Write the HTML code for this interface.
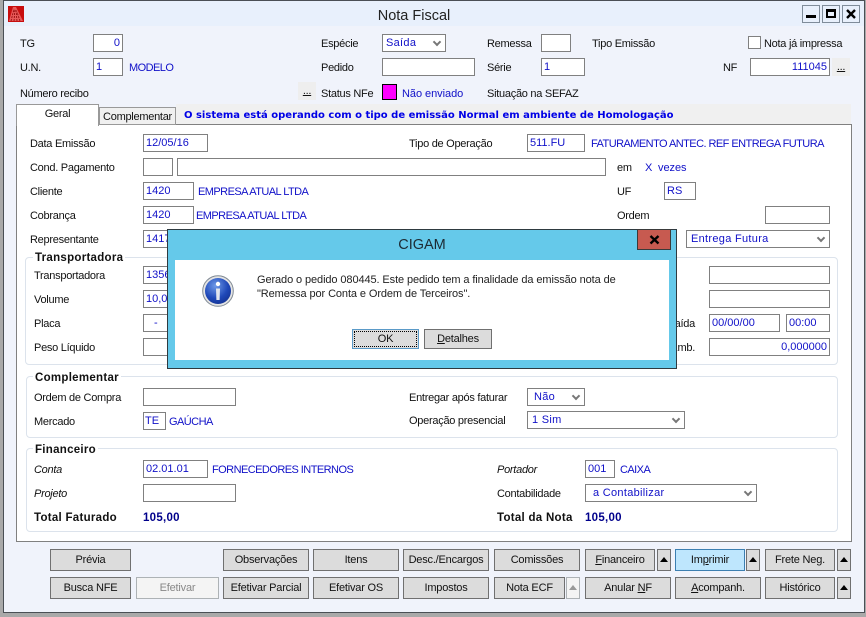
<!DOCTYPE html>
<html><head><meta charset="utf-8">
<style>
html,body{margin:0;padding:0}
body{width:866px;height:617px;position:relative;overflow:hidden;background:#a9a9a9;font:11px/18px "Liberation Sans",sans-serif;letter-spacing:-.27px;color:#111}
div,span.a{position:absolute;box-sizing:border-box;white-space:nowrap}
#win{left:3px;top:0;width:862px;height:613px;background:#f0f3fb;border:1px solid #4a4f55}
#tb{left:4px;top:1px;width:860px;height:25px;background:#e8f0fc}
.t{position:absolute;height:18px;line-height:18px;white-space:nowrap;margin-top:1px}
.b{color:#1010c8;letter-spacing:-.55px}
.m{color:#1010c8;letter-spacing:-.05px}
.i{height:18px;border:1px solid #808080;background:#fff;line-height:16px;color:#1010c8;padding:0 2px;overflow:hidden;letter-spacing:0}
.r{text-align:right}
.s{letter-spacing:.3px}
.s:after{content:"";position:absolute;right:5px;top:4px;width:4px;height:4px;border-right:2px solid #777;border-bottom:2px solid #777;transform:rotate(45deg)}
.g{border:1px solid #dce3ec;border-radius:4px}
.gt{font-weight:bold;background:#fff;padding:0 2px;height:14px;line-height:14px;color:#111;font-size:11.5px;letter-spacing:.28px;margin-top:1px}
.k{font-weight:bold;font-size:11.5px;letter-spacing:.28px}
.btn{height:22px;border:1px solid #707070;background:#dcdcdc;text-align:center;line-height:20px;color:#111;letter-spacing:-.2px}
.ar:after{content:"";position:absolute;left:2px;top:7px;border-left:4px solid transparent;border-right:4px solid transparent;border-bottom:5px solid #000}
.w{width:18px;height:18px;top:5px;border:1px solid #7f8c9a;background:#e8f0fc}
.e{background:#eee;width:18px;height:18px;text-align:center;line-height:18px}
u{text-decoration:underline}
</style></head><body>
<div id="win"></div><div id="tb"></div>
<svg style="position:absolute;left:8px;top:6px" width="16" height="16" viewBox="0 0 16 16"><rect width="16" height="16" fill="#c80d0d"/><path d="M1 15L5 1h3l7 14z" fill="#e85a5a"/><path d="M3 15L6 3M6 15L7 3M9 15L8 4M12 15L9 6" stroke="#8a0505" stroke-width=".8" stroke-dasharray="2 1"/></svg>
<div class="t" style="left:0;width:828px;top:6px;text-align:center;font-size:14.5px;letter-spacing:0;color:#222">Nota Fiscal</div>
<div class="w" style="left:802px"><div style="left:3px;top:9px;width:10px;height:3px;background:#000"></div></div>
<div class="w" style="left:822px"><div style="left:3px;top:3px;width:10px;height:9px;border:2px solid #000;border-top-width:3px"></div></div>
<div class="w" style="left:842px"><svg style="position:absolute;left:2px;top:2px" width="12" height="12"><path d="M2 2l8 8M10 2l-8 8" stroke="#000" stroke-width="2.4"/></svg></div>

<div class="t" style="left:20px;top:34px">TG</div><div class="i r" style="left:93px;top:34px;width:30px">0</div>
<div class="t" style="left:321px;top:34px">Espécie</div><div class="i s" style="left:382px;top:34px;width:64px;padding-left:3px">Saída</div>
<div class="t" style="left:487px;top:34px">Remessa</div><div class="i" style="left:541px;top:34px;width:30px"></div>
<div class="t" style="left:592px;top:34px">Tipo Emissão</div>
<div class="i" style="left:748px;top:36px;width:13px;height:13px"></div><div class="t" style="left:764px;top:34px">Nota já impressa</div>

<div class="t" style="left:20px;top:58px">U.N.</div><div class="i" style="left:93px;top:58px;width:30px">1</div><div class="t b" style="left:129px;top:58px">MODELO</div>
<div class="t" style="left:321px;top:58px">Pedido</div><div class="i" style="left:382px;top:58px;width:93px"></div>
<div class="t" style="left:487px;top:58px">Série</div><div class="i" style="left:541px;top:58px;width:44px">1</div>
<div class="t" style="left:723px;top:58px">NF</div><div class="i r" style="left:750px;top:58px;width:80px">111045</div><div class="e" style="left:832px;top:58px"><u>...</u></div>

<div class="t" style="left:20px;top:84px">Número recibo</div><div class="e" style="left:298px;top:82px"><u>...</u></div>
<div class="t" style="left:321px;top:84px">Status NFe</div><div style="left:382px;top:84px;width:15px;height:16px;background:#ff00ff;border:1px solid #000"></div>
<div class="t m" style="left:402px;top:84px">Não enviado</div><div class="t" style="left:487px;top:84px">Situação na SEFAZ</div>

<div style="left:16px;top:124px;width:836px;height:418px;background:#fff;border:1px solid #808080"></div>
<div style="left:99px;top:107px;width:77px;height:18px;background:#f0f0f0;border:1px solid #999;text-align:center;line-height:18px">Complementar</div>
<div style="left:16px;top:104px;width:83px;height:22px;background:#fff;border:1px solid #999;border-bottom:0;text-align:center;line-height:18px">Geral</div>
<div style="left:176px;top:104px;width:675px;height:20px;background:#f0f0f0"></div>
<div class="t" style="left:184px;top:106px;font:bold 10px/18px 'DejaVu Sans',sans-serif;letter-spacing:0;color:#0000e6">O sistema está operando com o tipo de emissão Normal em ambiente de Homologação</div>

<div class="t" style="left:30px;top:134px">Data Emissão</div><div class="i" style="left:143px;top:134px;width:65px">12/05/16</div>
<div class="t" style="left:409px;top:134px">Tipo de Operação</div><div class="i" style="left:527px;top:134px;width:58px">511.FU</div><div class="t b" style="left:591px;top:134px">FATURAMENTO ANTEC. REF ENTREGA FUTURA</div>
<div class="t" style="left:30px;top:158px">Cond. Pagamento</div><div class="i" style="left:143px;top:158px;width:30px"></div><div class="i" style="left:177px;top:158px;width:429px"></div>
<div class="t" style="left:617px;top:158px">em</div><div class="t m" style="left:645px;top:158px">X</div><div class="t m" style="left:658px;top:158px">vezes</div>
<div class="t" style="left:30px;top:182px">Cliente</div><div class="i" style="left:143px;top:182px;width:51px">1420</div><div class="t b" style="left:198px;top:182px">EMPRESA ATUAL LTDA</div>
<div class="t" style="left:617px;top:182px">UF</div><div class="i" style="left:664px;top:182px;width:32px">RS</div>
<div class="t" style="left:30px;top:206px">Cobrança</div><div class="i" style="left:143px;top:206px;width:51px">1420</div><div class="t b" style="left:196px;top:206px">EMPRESA ATUAL LTDA</div>
<div class="t" style="left:617px;top:206px">Ordem</div><div class="i" style="left:765px;top:206px;width:65px"></div>
<div class="t" style="left:30px;top:230px">Representante</div><div class="i" style="left:143px;top:230px;width:60px">1417</div>
<div class="i s" style="left:686px;top:230px;width:144px;padding-left:4px">Entrega Futura</div>

<div class="g" style="left:25px;top:257px;width:813px;height:108px"></div>
<div class="gt" style="left:33px;top:250px">Transportadora</div>
<div class="t" style="left:34px;top:266px">Transportadora</div><div class="i" style="left:143px;top:266px;width:60px">1356</div>
<div class="t" style="left:34px;top:290px">Volume</div><div class="i" style="left:143px;top:290px;width:60px">10,0</div>
<div class="t" style="left:34px;top:314px">Placa</div><div class="i" style="left:143px;top:314px;width:60px;padding-left:10px">-</div>
<div class="t" style="left:34px;top:338px">Peso Líquido</div><div class="i" style="left:143px;top:338px;width:60px"></div>
<div class="i" style="left:709px;top:266px;width:121px"></div><div class="i" style="left:709px;top:290px;width:121px"></div>
<div class="t" style="right:171px;top:314px">Data Saída</div><div class="i" style="left:709px;top:314px;width:71px">00/00/00</div><div class="i" style="left:786px;top:314px;width:44px">00:00</div>
<div class="t" style="right:171px;top:338px">Vol. Emb.</div><div class="i r" style="left:709px;top:338px;width:121px">0,000000</div>

<div class="g" style="left:26px;top:376px;width:812px;height:62px"></div>
<div class="gt" style="left:33px;top:370px">Complementar</div>
<div class="t" style="left:34px;top:388px">Ordem de Compra</div><div class="i" style="left:143px;top:388px;width:93px"></div>
<div class="t" style="left:409px;top:388px">Entregar após faturar</div><div class="i s" style="left:527px;top:388px;width:58px;padding-left:6px">Não</div>
<div class="t" style="left:34px;top:412px">Mercado</div><div class="i" style="left:143px;top:412px;width:23px;padding:0 1px">TE</div><div class="t b" style="left:169px;top:412px">GAÚCHA</div>
<div class="t" style="left:409px;top:411px">Operação presencial</div><div class="i s" style="left:527px;top:411px;width:158px;padding-left:4px">1 Sim</div>

<div class="g" style="left:26px;top:448px;width:812px;height:84px"></div>
<div class="gt" style="left:33px;top:442px">Financeiro</div>
<div class="t" style="left:34px;top:460px;font-style:italic">Conta</div><div class="i" style="left:143px;top:460px;width:65px">02.01.01</div><div class="t b" style="left:212px;top:460px">FORNECEDORES INTERNOS</div>
<div class="t" style="left:497px;top:460px;font-style:italic">Portador</div><div class="i" style="left:585px;top:460px;width:30px">001</div><div class="t b" style="left:620px;top:460px">CAIXA</div>
<div class="t" style="left:34px;top:484px;font-style:italic">Projeto</div><div class="i" style="left:143px;top:484px;width:93px"></div>
<div class="t" style="left:497px;top:484px">Contabilidade</div><div class="i s" style="left:585px;top:484px;width:172px;padding-left:7px">a Contabilizar</div>
<div class="t k" style="left:34px;top:508px">Total Faturado</div><div class="t k" style="left:143px;top:508px;color:#00008b">105,00</div>
<div class="t k" style="left:497px;top:508px">Total da Nota</div><div class="t k" style="left:585px;top:508px;color:#00008b">105,00</div>

<div class="btn" style="left:50px;top:549px;width:81px">Prévia</div>
<div class="btn" style="left:223px;top:549px;width:86px">Observações</div>
<div class="btn" style="left:313px;top:549px;width:86px">Itens</div>
<div class="btn" style="left:403px;top:549px;width:86px">Desc./Encargos</div>
<div class="btn" style="left:494px;top:549px;width:86px">Comissões</div>
<div class="btn" style="left:585px;top:549px;width:70px"><u>F</u>inanceiro</div>
<div class="btn ar" style="left:657px;top:549px;width:14px"></div>
<div class="btn" style="left:675px;top:549px;width:70px;background:#bee6fd;border-color:#3c7fb1">Im<u>p</u>rimir</div>
<div class="btn ar" style="left:746px;top:549px;width:14px"></div>
<div class="btn" style="left:765px;top:549px;width:70px">Frete Neg.</div>
<div class="btn ar" style="left:837px;top:549px;width:14px"></div>

<div class="btn" style="left:50px;top:577px;width:81px">Busca NFE</div>
<div class="btn" style="left:136px;top:577px;width:83px;background:#f4f4f4;border-color:#adb2b5;color:#888">Efetivar</div>
<div class="btn" style="left:223px;top:577px;width:86px">Efetivar Parcial</div>
<div class="btn" style="left:313px;top:577px;width:86px">Efetivar OS</div>
<div class="btn" style="left:403px;top:577px;width:86px">Impostos</div>
<div class="btn" style="left:494px;top:577px;width:71px">Nota ECF</div>
<div class="btn" style="left:566px;top:577px;width:14px;background:#f4f4f4;border-color:#adb2b5"><div style="left:2px;top:7px;border-left:4px solid transparent;border-right:4px solid transparent;border-bottom:5px solid #999"></div></div>
<div class="btn" style="left:585px;top:577px;width:86px">Anular <u>N</u>F</div>
<div class="btn" style="left:675px;top:577px;width:86px"><u>A</u>companh.</div>
<div class="btn" style="left:765px;top:577px;width:70px">Histórico</div>
<div class="btn ar" style="left:837px;top:577px;width:14px"></div>

<div style="left:167px;top:229px;width:510px;height:140px;background:#65c9ea;border:1px solid #2e3a40"></div>
<div style="left:175px;top:260px;width:494px;height:100px;background:#fff"></div>
<div class="t" style="left:167px;width:510px;top:235px;text-align:center;font-size:14.5px;letter-spacing:0;color:#1c2a33">CIGAM</div>
<div style="left:637px;top:229px;width:34px;height:21px;background:#c75a50;border:1px solid #3a3a3a"><svg style="position:absolute;left:11px;top:5px" width="11" height="10"><path d="M1.5 1l8 7.5M9.5 1l-8 7.5" stroke="#000" stroke-width="2.4"/></svg></div>
<svg style="position:absolute;left:202px;top:275px" width="32" height="32" viewBox="0 0 32 32"><defs><radialGradient id="g" cx=".4" cy=".3" r=".8"><stop offset="0" stop-color="#6f9ae8"/><stop offset=".6" stop-color="#1f48b8"/><stop offset="1" stop-color="#12308f"/></radialGradient></defs><circle cx="16" cy="16" r="15.3" fill="#e4e4e4" stroke="#808a94"/><circle cx="16" cy="16" r="13" fill="url(#g)"/><circle cx="16" cy="9" r="2.2" fill="#fff"/><path d="M14 13.5h4l-.4 11.5h-3.2z" fill="#e2e6ee"/></svg>
<div class="t" style="left:257px;top:272px;line-height:14px;height:28px;color:#222;letter-spacing:-.1px">Gerado o pedido 080445. Este pedido tem a finalidade da emissão nota de<br>"Remessa por Conta e Ordem de Terceiros".</div>
<div class="btn" style="left:352px;top:329px;width:67px;height:20px;line-height:18px;border-color:#5a9ac8"><div style="left:1px;top:1px;right:1px;bottom:1px;border:1px dotted #000"></div>OK</div>
<div class="btn" style="left:424px;top:329px;width:68px;height:20px;line-height:18px"><u>D</u>etalhes</div>
</body></html>
